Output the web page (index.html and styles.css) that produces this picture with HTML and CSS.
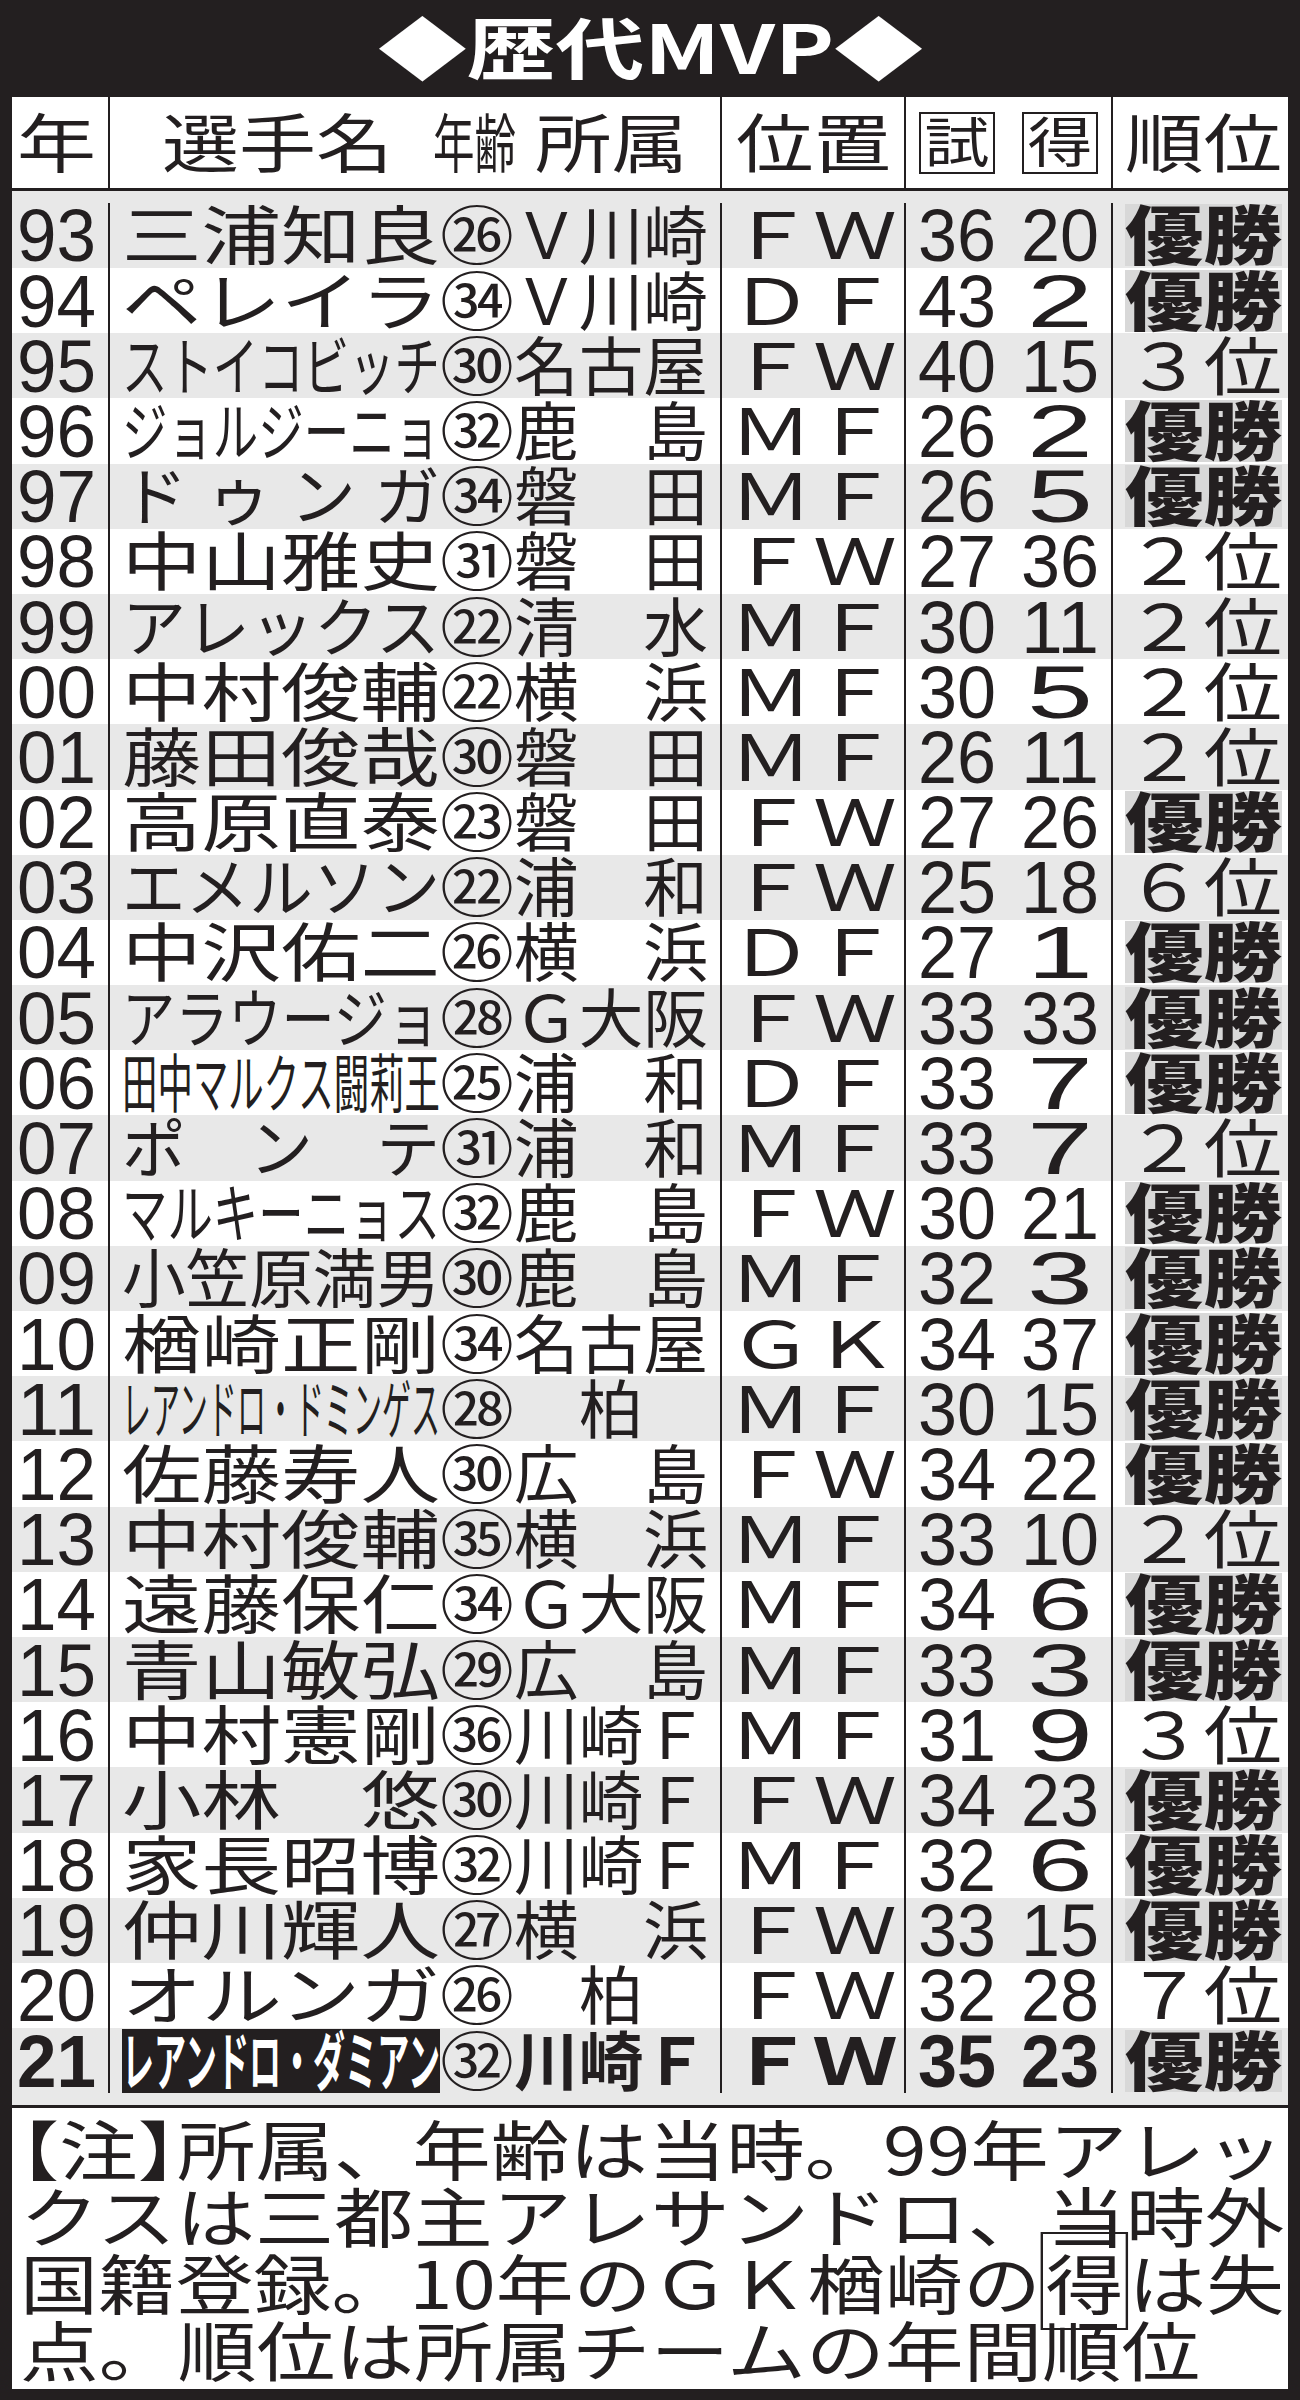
FILE: index.html
```html
<!DOCTYPE html>
<html lang="ja">
<head>
<meta charset="utf-8">
<title>歴代MVP</title>
<link rel="stylesheet" href="styles.css">
</head>
<body>
<div class="frame">
  <h1 class="title"><div class="fit w-title j"><span>◆歴代MVP◆</span></div></h1>

  <div class="table">
    <div class="row head">
      <div class="c yr"><div class="fit w-yr j"><span>年</span></div></div>
      <div class="c nm hn">
        <div class="fit w-h1 j"><span>選手名</span></div>
        <div class="fit w-h2 j"><span>年齢</span></div>
        <div class="fit w-h3 j"><span>所属</span></div>
      </div>
      <div class="c pos"><div class="fit w-h4 j"><span>位置</span></div></div>
      <div class="c num">
        <div class="h"><span class="kbox"><span>試</span></span></div>
        <div class="h"><span class="kbox"><span>得</span></span></div>
      </div>
      <div class="c rk"><div class="fit w-rk j"><span>順位</span></div></div>
    </div>

    <div class="rows">
      <div class="row first">
        <div class="c yr"><div class="fit w-yr d"><span>93</span></div></div>
        <div class="c nm"><div class="fit w-name j"><span>三浦知良</span></div><div class="fit w-age j age"><span>㉖</span></div><div class="fit w-team j"><span>Ｖ川崎</span></div></div>
        <div class="c pos"><div class="fit w-pos j"><span>ＦＷ</span></div></div>
        <div class="c num"><div class="h"><div class="fit w-n2 d"><span>36</span></div></div><div class="h"><div class="fit w-n2 d"><span>20</span></div></div></div>
        <div class="c rk"><div class="fit w-rk j win"><span>優勝</span></div></div>
      </div>
      <div class="row">
        <div class="c yr"><div class="fit w-yr d"><span>94</span></div></div>
        <div class="c nm"><div class="fit w-name j"><span>ペレイラ</span></div><div class="fit w-age j age"><span>㉞</span></div><div class="fit w-team j"><span>Ｖ川崎</span></div></div>
        <div class="c pos"><div class="fit w-pos j"><span>ＤＦ</span></div></div>
        <div class="c num"><div class="h"><div class="fit w-n2 d"><span>43</span></div></div><div class="h"><div class="fit w-n1 d"><span>2</span></div></div></div>
        <div class="c rk"><div class="fit w-rk j win"><span>優勝</span></div></div>
      </div>
      <div class="row">
        <div class="c yr"><div class="fit w-yr d"><span>95</span></div></div>
        <div class="c nm"><div class="fit w-name j"><span>ストイコビッチ</span></div><div class="fit w-age j age"><span>㉚</span></div><div class="fit w-team j"><span>名古屋</span></div></div>
        <div class="c pos"><div class="fit w-pos j"><span>ＦＷ</span></div></div>
        <div class="c num"><div class="h"><div class="fit w-n2 d"><span>40</span></div></div><div class="h"><div class="fit w-n2 d"><span>15</span></div></div></div>
        <div class="c rk"><div class="fit w-rk j"><span>３位</span></div></div>
      </div>
      <div class="row">
        <div class="c yr"><div class="fit w-yr d"><span>96</span></div></div>
        <div class="c nm"><div class="fit w-name j"><span>ジョルジーニョ</span></div><div class="fit w-age j age"><span>㉜</span></div><div class="fit w-team j"><span>鹿　島</span></div></div>
        <div class="c pos"><div class="fit w-pos j"><span>ＭＦ</span></div></div>
        <div class="c num"><div class="h"><div class="fit w-n2 d"><span>26</span></div></div><div class="h"><div class="fit w-n1 d"><span>2</span></div></div></div>
        <div class="c rk"><div class="fit w-rk j win"><span>優勝</span></div></div>
      </div>
      <div class="row">
        <div class="c yr"><div class="fit w-yr d"><span>97</span></div></div>
        <div class="c nm"><div class="fit w-name j"><span><span class="ls">ドゥン</span>ガ</span></div><div class="fit w-age j age"><span>㉞</span></div><div class="fit w-team j"><span>磐　田</span></div></div>
        <div class="c pos"><div class="fit w-pos j"><span>ＭＦ</span></div></div>
        <div class="c num"><div class="h"><div class="fit w-n2 d"><span>26</span></div></div><div class="h"><div class="fit w-n1 d"><span>5</span></div></div></div>
        <div class="c rk"><div class="fit w-rk j win"><span>優勝</span></div></div>
      </div>
      <div class="row">
        <div class="c yr"><div class="fit w-yr d"><span>98</span></div></div>
        <div class="c nm"><div class="fit w-name j"><span>中山雅史</span></div><div class="fit w-age j age"><span>㉛</span></div><div class="fit w-team j"><span>磐　田</span></div></div>
        <div class="c pos"><div class="fit w-pos j"><span>ＦＷ</span></div></div>
        <div class="c num"><div class="h"><div class="fit w-n2 d"><span>27</span></div></div><div class="h"><div class="fit w-n2 d"><span>36</span></div></div></div>
        <div class="c rk"><div class="fit w-rk j"><span>２位</span></div></div>
      </div>
      <div class="row">
        <div class="c yr"><div class="fit w-yr d"><span>99</span></div></div>
        <div class="c nm"><div class="fit w-name j"><span>アレックス</span></div><div class="fit w-age j age"><span>㉒</span></div><div class="fit w-team j"><span>清　水</span></div></div>
        <div class="c pos"><div class="fit w-pos j"><span>ＭＦ</span></div></div>
        <div class="c num"><div class="h"><div class="fit w-n2 d"><span>30</span></div></div><div class="h"><div class="fit w-n2 d"><span>11</span></div></div></div>
        <div class="c rk"><div class="fit w-rk j"><span>２位</span></div></div>
      </div>
      <div class="row">
        <div class="c yr"><div class="fit w-yr d"><span>00</span></div></div>
        <div class="c nm"><div class="fit w-name j"><span>中村俊輔</span></div><div class="fit w-age j age"><span>㉒</span></div><div class="fit w-team j"><span>横　浜</span></div></div>
        <div class="c pos"><div class="fit w-pos j"><span>ＭＦ</span></div></div>
        <div class="c num"><div class="h"><div class="fit w-n2 d"><span>30</span></div></div><div class="h"><div class="fit w-n1 d"><span>5</span></div></div></div>
        <div class="c rk"><div class="fit w-rk j"><span>２位</span></div></div>
      </div>
      <div class="row">
        <div class="c yr"><div class="fit w-yr d"><span>01</span></div></div>
        <div class="c nm"><div class="fit w-name j"><span>藤田俊哉</span></div><div class="fit w-age j age"><span>㉚</span></div><div class="fit w-team j"><span>磐　田</span></div></div>
        <div class="c pos"><div class="fit w-pos j"><span>ＭＦ</span></div></div>
        <div class="c num"><div class="h"><div class="fit w-n2 d"><span>26</span></div></div><div class="h"><div class="fit w-n2 d"><span>11</span></div></div></div>
        <div class="c rk"><div class="fit w-rk j"><span>２位</span></div></div>
      </div>
      <div class="row">
        <div class="c yr"><div class="fit w-yr d"><span>02</span></div></div>
        <div class="c nm"><div class="fit w-name j"><span>高原直泰</span></div><div class="fit w-age j age"><span>㉓</span></div><div class="fit w-team j"><span>磐　田</span></div></div>
        <div class="c pos"><div class="fit w-pos j"><span>ＦＷ</span></div></div>
        <div class="c num"><div class="h"><div class="fit w-n2 d"><span>27</span></div></div><div class="h"><div class="fit w-n2 d"><span>26</span></div></div></div>
        <div class="c rk"><div class="fit w-rk j win"><span>優勝</span></div></div>
      </div>
      <div class="row">
        <div class="c yr"><div class="fit w-yr d"><span>03</span></div></div>
        <div class="c nm"><div class="fit w-name j"><span>エメルソン</span></div><div class="fit w-age j age"><span>㉒</span></div><div class="fit w-team j"><span>浦　和</span></div></div>
        <div class="c pos"><div class="fit w-pos j"><span>ＦＷ</span></div></div>
        <div class="c num"><div class="h"><div class="fit w-n2 d"><span>25</span></div></div><div class="h"><div class="fit w-n2 d"><span>18</span></div></div></div>
        <div class="c rk"><div class="fit w-rk j"><span>６位</span></div></div>
      </div>
      <div class="row">
        <div class="c yr"><div class="fit w-yr d"><span>04</span></div></div>
        <div class="c nm"><div class="fit w-name j"><span>中沢佑二</span></div><div class="fit w-age j age"><span>㉖</span></div><div class="fit w-team j"><span>横　浜</span></div></div>
        <div class="c pos"><div class="fit w-pos j"><span>ＤＦ</span></div></div>
        <div class="c num"><div class="h"><div class="fit w-n2 d"><span>27</span></div></div><div class="h"><div class="fit w-n1 d"><span>1</span></div></div></div>
        <div class="c rk"><div class="fit w-rk j win"><span>優勝</span></div></div>
      </div>
      <div class="row">
        <div class="c yr"><div class="fit w-yr d"><span>05</span></div></div>
        <div class="c nm"><div class="fit w-name j"><span>アラウージョ</span></div><div class="fit w-age j age"><span>㉘</span></div><div class="fit w-team j"><span>Ｇ大阪</span></div></div>
        <div class="c pos"><div class="fit w-pos j"><span>ＦＷ</span></div></div>
        <div class="c num"><div class="h"><div class="fit w-n2 d"><span>33</span></div></div><div class="h"><div class="fit w-n2 d"><span>33</span></div></div></div>
        <div class="c rk"><div class="fit w-rk j win"><span>優勝</span></div></div>
      </div>
      <div class="row">
        <div class="c yr"><div class="fit w-yr d"><span>06</span></div></div>
        <div class="c nm"><div class="fit w-name j"><span>田中マルクス闘莉王</span></div><div class="fit w-age j age"><span>㉕</span></div><div class="fit w-team j"><span>浦　和</span></div></div>
        <div class="c pos"><div class="fit w-pos j"><span>ＤＦ</span></div></div>
        <div class="c num"><div class="h"><div class="fit w-n2 d"><span>33</span></div></div><div class="h"><div class="fit w-n1 d"><span>7</span></div></div></div>
        <div class="c rk"><div class="fit w-rk j win"><span>優勝</span></div></div>
      </div>
      <div class="row">
        <div class="c yr"><div class="fit w-yr d"><span>07</span></div></div>
        <div class="c nm"><div class="fit w-name j"><span>ポ　ン　テ</span></div><div class="fit w-age j age"><span>㉛</span></div><div class="fit w-team j"><span>浦　和</span></div></div>
        <div class="c pos"><div class="fit w-pos j"><span>ＭＦ</span></div></div>
        <div class="c num"><div class="h"><div class="fit w-n2 d"><span>33</span></div></div><div class="h"><div class="fit w-n1 d"><span>7</span></div></div></div>
        <div class="c rk"><div class="fit w-rk j"><span>２位</span></div></div>
      </div>
      <div class="row">
        <div class="c yr"><div class="fit w-yr d"><span>08</span></div></div>
        <div class="c nm"><div class="fit w-name j"><span>マルキーニョス</span></div><div class="fit w-age j age"><span>㉜</span></div><div class="fit w-team j"><span>鹿　島</span></div></div>
        <div class="c pos"><div class="fit w-pos j"><span>ＦＷ</span></div></div>
        <div class="c num"><div class="h"><div class="fit w-n2 d"><span>30</span></div></div><div class="h"><div class="fit w-n2 d"><span>21</span></div></div></div>
        <div class="c rk"><div class="fit w-rk j win"><span>優勝</span></div></div>
      </div>
      <div class="row">
        <div class="c yr"><div class="fit w-yr d"><span>09</span></div></div>
        <div class="c nm"><div class="fit w-name j"><span>小笠原満男</span></div><div class="fit w-age j age"><span>㉚</span></div><div class="fit w-team j"><span>鹿　島</span></div></div>
        <div class="c pos"><div class="fit w-pos j"><span>ＭＦ</span></div></div>
        <div class="c num"><div class="h"><div class="fit w-n2 d"><span>32</span></div></div><div class="h"><div class="fit w-n1 d"><span>3</span></div></div></div>
        <div class="c rk"><div class="fit w-rk j win"><span>優勝</span></div></div>
      </div>
      <div class="row">
        <div class="c yr"><div class="fit w-yr d"><span>10</span></div></div>
        <div class="c nm"><div class="fit w-name j"><span>楢崎正剛</span></div><div class="fit w-age j age"><span>㉞</span></div><div class="fit w-team j"><span>名古屋</span></div></div>
        <div class="c pos"><div class="fit w-pos j"><span>ＧＫ</span></div></div>
        <div class="c num"><div class="h"><div class="fit w-n2 d"><span>34</span></div></div><div class="h"><div class="fit w-n2 d"><span>37</span></div></div></div>
        <div class="c rk"><div class="fit w-rk j win"><span>優勝</span></div></div>
      </div>
      <div class="row">
        <div class="c yr"><div class="fit w-yr d"><span>11</span></div></div>
        <div class="c nm"><div class="fit w-name j"><span>レアンドロ・ドミンゲス</span></div><div class="fit w-age j age"><span>㉘</span></div><div class="fit w-team j"><span>　柏　</span></div></div>
        <div class="c pos"><div class="fit w-pos j"><span>ＭＦ</span></div></div>
        <div class="c num"><div class="h"><div class="fit w-n2 d"><span>30</span></div></div><div class="h"><div class="fit w-n2 d"><span>15</span></div></div></div>
        <div class="c rk"><div class="fit w-rk j win"><span>優勝</span></div></div>
      </div>
      <div class="row">
        <div class="c yr"><div class="fit w-yr d"><span>12</span></div></div>
        <div class="c nm"><div class="fit w-name j"><span>佐藤寿人</span></div><div class="fit w-age j age"><span>㉚</span></div><div class="fit w-team j"><span>広　島</span></div></div>
        <div class="c pos"><div class="fit w-pos j"><span>ＦＷ</span></div></div>
        <div class="c num"><div class="h"><div class="fit w-n2 d"><span>34</span></div></div><div class="h"><div class="fit w-n2 d"><span>22</span></div></div></div>
        <div class="c rk"><div class="fit w-rk j win"><span>優勝</span></div></div>
      </div>
      <div class="row">
        <div class="c yr"><div class="fit w-yr d"><span>13</span></div></div>
        <div class="c nm"><div class="fit w-name j"><span>中村俊輔</span></div><div class="fit w-age j age"><span>㉟</span></div><div class="fit w-team j"><span>横　浜</span></div></div>
        <div class="c pos"><div class="fit w-pos j"><span>ＭＦ</span></div></div>
        <div class="c num"><div class="h"><div class="fit w-n2 d"><span>33</span></div></div><div class="h"><div class="fit w-n2 d"><span>10</span></div></div></div>
        <div class="c rk"><div class="fit w-rk j"><span>２位</span></div></div>
      </div>
      <div class="row">
        <div class="c yr"><div class="fit w-yr d"><span>14</span></div></div>
        <div class="c nm"><div class="fit w-name j"><span>遠藤保仁</span></div><div class="fit w-age j age"><span>㉞</span></div><div class="fit w-team j"><span>Ｇ大阪</span></div></div>
        <div class="c pos"><div class="fit w-pos j"><span>ＭＦ</span></div></div>
        <div class="c num"><div class="h"><div class="fit w-n2 d"><span>34</span></div></div><div class="h"><div class="fit w-n1 d"><span>6</span></div></div></div>
        <div class="c rk"><div class="fit w-rk j win"><span>優勝</span></div></div>
      </div>
      <div class="row">
        <div class="c yr"><div class="fit w-yr d"><span>15</span></div></div>
        <div class="c nm"><div class="fit w-name j"><span>青山敏弘</span></div><div class="fit w-age j age"><span>㉙</span></div><div class="fit w-team j"><span>広　島</span></div></div>
        <div class="c pos"><div class="fit w-pos j"><span>ＭＦ</span></div></div>
        <div class="c num"><div class="h"><div class="fit w-n2 d"><span>33</span></div></div><div class="h"><div class="fit w-n1 d"><span>3</span></div></div></div>
        <div class="c rk"><div class="fit w-rk j win"><span>優勝</span></div></div>
      </div>
      <div class="row">
        <div class="c yr"><div class="fit w-yr d"><span>16</span></div></div>
        <div class="c nm"><div class="fit w-name j"><span>中村憲剛</span></div><div class="fit w-age j age"><span>㊱</span></div><div class="fit w-team j"><span>川崎Ｆ</span></div></div>
        <div class="c pos"><div class="fit w-pos j"><span>ＭＦ</span></div></div>
        <div class="c num"><div class="h"><div class="fit w-n2 d"><span>31</span></div></div><div class="h"><div class="fit w-n1 d"><span>9</span></div></div></div>
        <div class="c rk"><div class="fit w-rk j"><span>３位</span></div></div>
      </div>
      <div class="row">
        <div class="c yr"><div class="fit w-yr d"><span>17</span></div></div>
        <div class="c nm"><div class="fit w-name j"><span>小林　悠</span></div><div class="fit w-age j age"><span>㉚</span></div><div class="fit w-team j"><span>川崎Ｆ</span></div></div>
        <div class="c pos"><div class="fit w-pos j"><span>ＦＷ</span></div></div>
        <div class="c num"><div class="h"><div class="fit w-n2 d"><span>34</span></div></div><div class="h"><div class="fit w-n2 d"><span>23</span></div></div></div>
        <div class="c rk"><div class="fit w-rk j win"><span>優勝</span></div></div>
      </div>
      <div class="row">
        <div class="c yr"><div class="fit w-yr d"><span>18</span></div></div>
        <div class="c nm"><div class="fit w-name j"><span>家長昭博</span></div><div class="fit w-age j age"><span>㉜</span></div><div class="fit w-team j"><span>川崎Ｆ</span></div></div>
        <div class="c pos"><div class="fit w-pos j"><span>ＭＦ</span></div></div>
        <div class="c num"><div class="h"><div class="fit w-n2 d"><span>32</span></div></div><div class="h"><div class="fit w-n1 d"><span>6</span></div></div></div>
        <div class="c rk"><div class="fit w-rk j win"><span>優勝</span></div></div>
      </div>
      <div class="row">
        <div class="c yr"><div class="fit w-yr d"><span>19</span></div></div>
        <div class="c nm"><div class="fit w-name j"><span>仲川輝人</span></div><div class="fit w-age j age"><span>㉗</span></div><div class="fit w-team j"><span>横　浜</span></div></div>
        <div class="c pos"><div class="fit w-pos j"><span>ＦＷ</span></div></div>
        <div class="c num"><div class="h"><div class="fit w-n2 d"><span>33</span></div></div><div class="h"><div class="fit w-n2 d"><span>15</span></div></div></div>
        <div class="c rk"><div class="fit w-rk j win"><span>優勝</span></div></div>
      </div>
      <div class="row">
        <div class="c yr"><div class="fit w-yr d"><span>20</span></div></div>
        <div class="c nm"><div class="fit w-name j"><span>オルンガ</span></div><div class="fit w-age j age"><span>㉖</span></div><div class="fit w-team j"><span>　柏　</span></div></div>
        <div class="c pos"><div class="fit w-pos j"><span>ＦＷ</span></div></div>
        <div class="c num"><div class="h"><div class="fit w-n2 d"><span>32</span></div></div><div class="h"><div class="fit w-n2 d"><span>28</span></div></div></div>
        <div class="c rk"><div class="fit w-rk j"><span>７位</span></div></div>
      </div>
      <div class="row last">
        <div class="c yr"><div class="fit w-yr d"><span>21</span></div></div>
        <div class="c nm"><div class="fit w-name j rev"><span>レアンドロ・ダミアン</span></div><div class="fit w-age j age"><span>㉜</span></div><div class="fit w-team j"><span>川崎Ｆ</span></div></div>
        <div class="c pos"><div class="fit w-pos j"><span>ＦＷ</span></div></div>
        <div class="c num"><div class="h"><div class="fit w-n2 d"><span>35</span></div></div><div class="h"><div class="fit w-n2 d"><span>23</span></div></div></div>
        <div class="c rk"><div class="fit w-rk j win"><span>優勝</span></div></div>
      </div>
    </div>
  </div>

  <div class="note">
    <div class="fit w-nl j nl"><span><span class="halt">【注】</span>所属、年齢は当時。99年アレッ</span></div>
    <div class="fit w-nl j nl"><span>クスは三都主アレサンドロ、当時外</span></div>
    <div class="fit w-nl j nl"><span>国籍登録。10年のＧＫ楢崎の<span class="bx">得</span>は失</span></div>
    <div class="fit w-nl4 j nl"><span>点。順位は所属チームの年間順位</span></div>
  </div>
</div>
<script src="fit.js"></script>
</body>
</html>
```

FILE: styles.css
```css
html, body {
  margin: 0;
  padding: 0;
  background: #231f20;
}
body {
  width: 1300px;
  min-height: 2400px;
  font-family: "Noto Sans CJK JP", "Noto Sans CJK SC", sans-serif;
  color: #231f20;
}
.frame {
  padding: 0 12px;
}

/* generic fit-to-width boxes (scaled by fit.js) */
.fit {
  display: flex;
  flex: none;
  align-items: flex-start;
  overflow: visible;
}
.fit > span {
  display: inline-block;
  flex: none;
  white-space: nowrap;
  transform-origin: 0 50%;
}
.j {
  font-family: "Noto Sans CJK JP", "Noto Sans CJK SC", sans-serif;
  font-size: 64px;
  font-weight: 400;
  height: 64px;
  line-height: 57px;
}
.d {
  font-family: "Liberation Sans", Arial, sans-serif;
  font-size: 75px;
  height: 64px;
  line-height: 64px;
}

/* title */
.title {
  margin: 0;
  height: 97px;
  display: flex;
  justify-content: center;
  align-items: center;
  color: #fff;
}
.title .j {
  font-size: 67px;
  font-weight: 700;
  height: 70px;
  line-height: 62px;
}
.w-title { width: 545px; }

/* table */
.table {
  background: #fff;
  border-bottom: 3px solid #231f20;
}
.row {
  display: grid;
  grid-template-columns: 96px 612px 184px 207px 177px;
  height: 65.2px;
  box-sizing: border-box;
}
.row.head {
  height: 94px;
  border-bottom: 3px solid #231f20;
}
.rows .row:nth-child(odd) {
  background: #e8e8e8;
}
.row.first {
  height: 77px;
  padding-top: 11.8px;
}
.row.last {
  height: 76.6px;
  padding-bottom: 11.4px;
}
.c {
  display: flex;
  align-items: center;
  box-sizing: border-box;
  border-left: 2px solid #231f20;
  min-width: 0;
}
.c.yr {
  border-left: 0;
  padding-left: 5px;
}
.c.nm { padding-left: 12px; }
.c.nm.hn { padding-left: 52px; }
.c.pos { justify-content: center; }
.c.num {
  display: grid;
  grid-template-columns: 1fr 1fr;
  align-items: center;
}
.c.num .h {
  display: flex;
  justify-content: center;
  align-items: center;
}
.c.rk { padding-left: 12px; }

/* box widths */
.w-yr { width: 79px; }
.w-name { width: 318px; }
.w-age { width: 74px; }
.w-team { width: 194px; }
.w-pos { width: 168px; }
.w-n2 { width: 78px; }
.w-n1 { width: 66px; }
.w-rk { width: 157px; }
.w-h1 { width: 231px; }
.w-h2 { width: 83px; margin-left: 40px; }
.w-h3 { width: 153px; margin-left: 19px; }
.w-h4 { width: 155px; }

.win {
  background: #d8d8d8;
  height: 62px;
  line-height: 55px;
}
.win > span { font-weight: 900; }
.ls { letter-spacing: 0.28em; }

.rev {
  background: #231f20;
  color: #fff;
}
.last .yr span,
.last .rev span,
.last .w-team span,
.last .pos span,
.last .num span {
  font-weight: 700;
}

/* boxed header chars */
.kbox {
  display: block;
  width: 76px;
  height: 62px;
  box-sizing: border-box;
  border: 2px solid #231f20;
  text-align: center;
  font-size: 54px;
  line-height: 52px;
  font-weight: 400;
}
.kbox > span {
  display: inline-block;
  transform: scaleX(1.2);
}

/* note */
.note {
  background: #fff;
  padding: 6px 8px 7px;
}
.nl {
  font-size: 65px;
  height: 67px;
  line-height: 67px;
}
.w-nl { width: 1264px; }
.w-nl4 { width: 1180px; }
.halt { font-feature-settings: "halt" 1; }
.bx {
  border: 2px solid #231f20;
  line-height: 1;
  padding: 0 2px;
}
```

FILE: fit.js
```js
(function () {
  var boxes = document.querySelectorAll('.fit');
  for (var i = 0; i < boxes.length; i++) {
    var box = boxes[i];
    var t = box.firstElementChild;
    if (!t) continue;
    var w = t.getBoundingClientRect().width;
    var W = box.clientWidth;
    if (w > 0 && W > 0) {
      t.style.transform = 'scaleX(' + (W / w).toFixed(4) + ')';
    }
  }
})();
```
